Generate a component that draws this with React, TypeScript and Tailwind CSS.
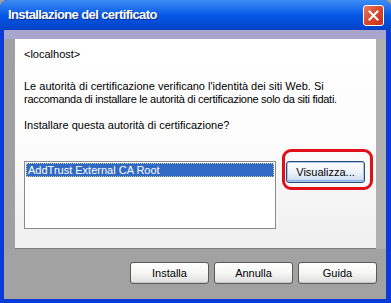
import React from "react";

const font = { fontFamily: '"Liberation Sans", Arial, sans-serif' };

function XpButton({ label, focused }: { label: string; focused?: boolean }) {
  return (
    <div
      className={
        "flex h-[22px] w-[79px] items-center justify-center rounded-[3px] border text-[11px] text-black " +
        (focused
          ? "border-[#2a4a78] bg-gradient-to-b from-[#ffffff] via-[#eef3fb] to-[#c9daf3] shadow-[inset_0_0_0_1px_#a9c5ee,inset_0_-1px_0_1px_#8fb0e4]"
          : "border-[#5a5a5a] bg-gradient-to-b from-[#ffffff] via-[#f6f6f4] to-[#dedede] shadow-[inset_0_-1px_0_#c8c8c8]")
      }
    >
      {label}
    </div>
  );
}

export default function App() {
  return (
    <div className="relative h-[303px] w-[391px] overflow-hidden bg-[#a0a0a0]" style={font}>
      <div className="flex h-[303px] w-[391px] flex-col rounded-t-[8px] bg-[#0a3ad8] pb-[4px] pl-[4px] pr-[5px]">
        {/* title bar */}
        <div className="-ml-[4px] -mr-[5px] flex h-[30px] items-center justify-between rounded-t-[8px] bg-gradient-to-b from-[#3d8df5] via-[#0458e6] to-[#0342c8] pl-[8px] pr-[7px]">
          <span className="text-[13px] font-bold tracking-[-0.6px] text-white [text-shadow:1px_1px_0_#0a2a8a]">
            Installazione del certificato
          </span>
          <div className="flex h-[21px] w-[21px] items-center justify-center rounded-[3px] border border-white bg-gradient-to-br from-[#e77a5e] via-[#d9472a] to-[#c2321a]">
            <svg width="11" height="11" viewBox="0 0 11 11">
              <path d="M1.5 1.5 L9.5 9.5 M9.5 1.5 L1.5 9.5" stroke="white" strokeWidth="2" strokeLinecap="square" />
            </svg>
          </div>
        </div>
        {/* body */}
        <div className="flex flex-1 flex-col bg-[#a2a2a2]">
          <div className="h-[9px] bg-[#a8a6cc]" />
          <div className="flex">
            <div className="w-[11px] bg-[#a0a0a0]" />
            <div className="flex h-[210px] w-[361px] flex-col border-b border-[#7a7a7a] bg-gradient-to-b from-[#ffffff] via-[#fcfcfc] to-[#efefef] pl-[9px] pt-[9px] text-[11px] leading-[13px] text-black">
              <div>&lt;localhost&gt;</div>
              <div className="mt-[19px]">
                <div>Le autorità di certificazione verificano l'identità dei siti Web. Si</div>
                <div className="tracking-[-0.28px]">
                  raccomanda di installare le autorità di certificazione solo da siti fidati.
                </div>
              </div>
              <div className="mt-[13px]">Installare questa autorità di certificazione?</div>
              <div className="mt-[29px] flex items-start gap-[10px]">
                <div className="h-[68px] w-[252px] border border-[#8a8a8a] bg-white p-px">
                  <div className="flex h-[14px] items-center bg-[#316ac5] pl-[2px] text-white outline outline-1 -outline-offset-1 outline-dotted outline-[#c8d0a0]">
                    AddTrust External CA Root
                  </div>
                </div>
                <XpButton label="Visualizza..." focused />
              </div>
            </div>
            <div className="flex-1 bg-[#b0b0b0]" />
          </div>
          <div className="mt-[13px] flex justify-end gap-[5px] pr-[9px]">
            <XpButton label="Installa" />
            <XpButton label="Annulla" />
            <XpButton label="Guida" />
          </div>
        </div>
      </div>
      {/* red annotation */}
      <div className="absolute left-[282px] top-[149px] h-[41px] w-[91px] rounded-[9px] border-[3px] border-[#e0101a]" />
    </div>
  );
}
